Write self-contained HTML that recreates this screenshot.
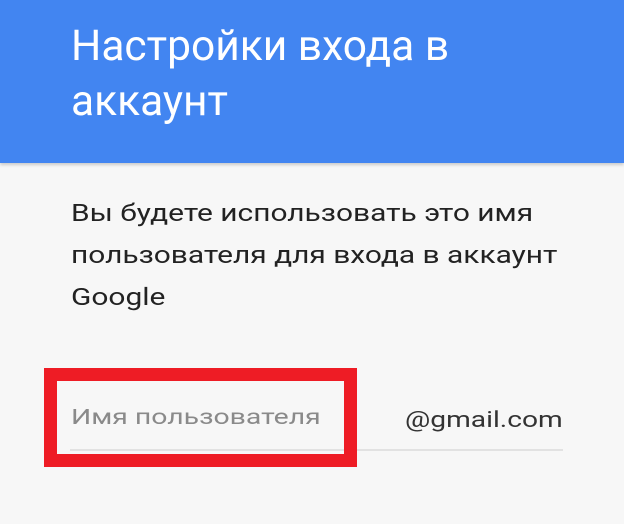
<!DOCTYPE html>
<html><head><meta charset="utf-8"><style>
html,body{margin:0;padding:0;width:624px;height:524px;overflow:hidden;background:#f7f7f7;font-family:"Roboto","Liberation Sans","DejaVu Sans",sans-serif}
.hdr{position:absolute;left:0;top:0;width:624px;height:163px;background:#4285f1;box-shadow:0 2px 3px rgba(0,0,0,.18)}
.t{position:absolute;left:71px;color:#fff;font-size:42.5px;white-space:nowrap}
.b{position:absolute;left:71px;color:#222;font-size:24.5px;white-space:nowrap;transform:scaleX(1.22);transform-origin:0 0}
.box{position:absolute;left:44px;top:368px;width:287px;height:73px;border:13px solid #ee1c25}
</style></head><body>
<div class="hdr"></div>
<div class="t" style="top:22px">Настройки входа в</div>
<div class="t" style="top:77px">аккаунт</div>
<div class="b" style="top:198px">Вы будете использовать это имя</div>
<div class="b" style="top:240px">пользователя для входа в аккаунт</div>
<div class="b" style="top:282px">Google</div>
<div style="position:absolute;left:70px;top:449px;width:493px;height:2px;background:#e2e2e2"></div>
<div style="position:absolute;left:71px;top:405px;font-size:21.5px;color:#8a8a8a;white-space:nowrap;transform:scaleX(1.32);transform-origin:0 0">Имя пользователя</div>
<div style="position:absolute;left:405px;top:408px;font-size:22px;color:#333;white-space:nowrap;transform:scaleX(1.28);transform-origin:0 0">@gmail.com</div>
<div class="box"></div>
</body></html>
